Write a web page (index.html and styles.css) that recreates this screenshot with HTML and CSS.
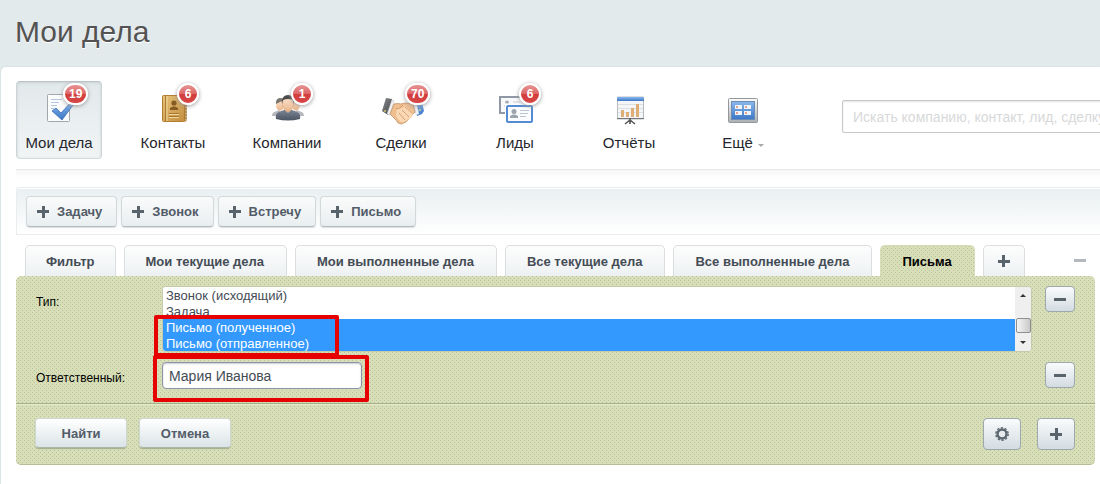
FILE: index.html
```html
<!DOCTYPE html>
<html lang="ru">
<head>
<meta charset="utf-8">
<title>Мои дела</title>
<link rel="stylesheet" href="styles.css">
</head>
<body>
<h1 class="title">Мои дела</h1>
<main class="panel">
  <div class="top">
    <nav class="nav">
      <a class="nav-item active" href="#">
        <svg class="nav-icon" viewBox="0 0 44 34"><defs><linearGradient id="blue" x2="0" y2="1"><stop stop-color="#8ab8ec"/><stop offset="1" stop-color="#3b76c6"/></linearGradient></defs>
          <rect x="10.5" y="2.500" width="22" height="27" rx="1" fill="#fbfcfd" stroke="#a3a7ad"/>
          <path d="M14 7.500h11M14 10.500h8M14 13.500h6M14 16.500h3" stroke="#b5c5df"/>
          <path d="M15 19l4-3 5 5 11-12h4L25 28z" fill="url(#blue)" stroke="#3f72b5" stroke-width=".8"/></svg>
        <span>Мои дела</span><b class="badge">19</b></a>
      <a class="nav-item" href="#">
        <svg class="nav-icon" viewBox="0 0 44 34"><defs><linearGradient id="gold" x2="1" y2="1"><stop stop-color="#e5c37c"/><stop offset="1" stop-color="#c48e3e"/></linearGradient></defs>
          <path d="M33 5h2v24h-2" fill="#f2dfb0" stroke="#a97a35"/><path d="M33 8h3M33 11h3M33 14h3M33 17h3M33 20h3M33 23h3M33 26h3" stroke="#8f6428"/>
          <rect x="11.500" y="3.500" width="22" height="26" rx="1" fill="url(#gold)" stroke="#b17d31"/>
          <path d="M14.500 4v25" stroke="#ad7b35"/><path d="M16 4v25" stroke="#f0d697"/>
          <circle cx="23" cy="11" r="2.600" fill="#845b20"/><path d="M19 18v-2l3-1.500h2l3 1.500v2z" fill="#845b20"/>
          <path d="M18 22.500h10M18 25.500h10" stroke="#f0d79d"/><path d="M18 21.500h10M18 24.500h10" stroke="#a6762f"/></svg>
        <span>Контакты</span><b class="badge">6</b></a>
      <a class="nav-item" href="#">
        <svg class="nav-icon" viewBox="0 0 44 34"><defs><linearGradient id="suit" x2="0" y2="1"><stop stop-color="#7b8594"/><stop offset="1" stop-color="#4b5462"/></linearGradient><linearGradient id="skin" x2="0" y2="1"><stop stop-color="#ffe6cf"/><stop offset="1" stop-color="#e9b68c"/></linearGradient></defs>
          <path d="M7 24c0-4 3-4 7-6l5 6zM39 24c0-4-3-4-7-6l-5 6z" fill="#b4b7bb"/>
          <ellipse cx="15" cy="13" rx="4" ry="5.500" fill="url(#skin)"/><ellipse cx="31" cy="13" rx="4" ry="5.500" fill="url(#skin)"/>
          <path d="M11 12c-1-7 7-7 8-4zM35 12c1-7-7-7-8-4z" fill="#7c7670"/>
          <path d="M11 27c-1-6 2-7 8-9h8c6 2 9 3 8 9q-12 3-24 0z" fill="url(#suit)"/>
          <path d="M19 17l4 4 4-4z" fill="#e8b88e"/>
          <ellipse cx="23" cy="12" rx="5.600" ry="7.400" fill="url(#skin)" stroke="#d5a27b" stroke-width=".5"/>
          <path d="M17 12c-2-12 14-12 12 0l-1-4q-5-2-10 0z" fill="#4a4a4b"/></svg>
        <span>Компании</span><b class="badge">1</b></a>
      <a class="nav-item" href="#">
        <svg class="nav-icon" viewBox="0 0 44 34"><defs><linearGradient id="dark" x2="1" y2="1"><stop stop-color="#898b8e"/><stop offset="1" stop-color="#424548"/></linearGradient></defs>
          <path d="M7 6l6 1-4 16-6-4z" fill="url(#dark)"/><path d="M13 8l2 1-4 14-3-1z" fill="#f2f3f4" stroke="#bbb" stroke-width=".5"/>
          <path d="M36 9l6-3 3 13-2 3-5 2z" fill="url(#blue)"/><path d="M34 10l3-1 3 13-3 1z" fill="#eef4fa" stroke="#b7c6d7" stroke-width=".5"/>
          <path d="M15 12q4-1 7 0l4-1 8 1 2 8-3 3-6 7-5 2q-3 0-5-4l-6-6z" fill="#f0bf91" stroke="#c08e61" stroke-width=".8"/>
          <path d="M18 17q5 0 8-3l7 6q2 6-4 7-3 4-7 3-4-3-5-7z" fill="#fad8b4"/>
          <path d="M24 13q-3 4-7 4M26 15l7 6M23 18l7 7M20 21l6 7" fill="none" stroke="#c48a5b" stroke-width=".7"/>
          <circle cx="6" cy="19" r="1" fill="#d1c76e"/><circle cx="41" cy="18" r="1" fill="#cfd68e"/></svg>
        <span>Сделки</span><b class="badge">70</b></a>
      <a class="nav-item" href="#">
        <svg class="nav-icon" viewBox="0 0 44 34"><path d="M7 5h28v16H7z" fill="#f8f9fa" stroke="#8f98a4" stroke-width="2"/>
          <ellipse cx="14" cy="10" rx="2" ry="1.500" fill="#a7afb8"/><path d="M11 14h5M20 10h7M20 13h6" stroke="#c8cdd3"/>
          <path d="M12 12h29v20H12z" fill="#fff"/><rect x="14" y="14" width="25" height="16" rx="1" fill="#fbfcfd" stroke="#548bd4" stroke-width="2"/>
          <circle cx="21" cy="19.500" r="2.500" fill="#9ca5ae"/><path d="M17 26v-2l3-1.500h2l3 1.500v2z" fill="#9ca5ae"/>
          <path d="M27 18.500h9M27 21.500h8M27 24.500h6" stroke="#bcc4ce"/></svg>
        <span>Лиды</span><b class="badge">6</b></a>
      <a class="nav-item" href="#">
        <svg class="nav-icon" viewBox="0 0 44 34"><path d="M10.500 5h26v22h-26z" fill="#f4f5f6" stroke="#b9bcbf"/><path d="M11 12.500h25M11 16.500h25M11 20.500h25" stroke="#dde0e2"/>
          <path d="M10 5h27v4H10z" fill="url(#blue)"/><path d="M14 18h3v7h-3zM19 20h3v5h-3zM24 16h3v9h-3zM29 12h3v13h-3z" fill="#dfad76"/>
          <path d="M10 26.500h27" stroke="#777"/><path d="M23 26v6M23 28l-5 4M23 28l5 4" stroke="#555" stroke-width="1.600"/></svg>
        <span>Отчёты</span></a>
      <a class="nav-item" href="#">
        <svg class="nav-icon" viewBox="0 0 44 34"><defs><linearGradient id="frame" x2="0" y2="1"><stop stop-color="#fbfbfb"/><stop offset="1" stop-color="#adb0b3"/></linearGradient></defs>
          <rect x="7.500" y="6.500" width="29" height="24" rx="1" fill="url(#frame)" stroke="#94989c"/>
          <rect x="10.500" y="9.500" width="23" height="18" fill="url(#blue)" stroke="#6e8db5"/>
          <path d="M14 13h7v4h-7zM23 13h7v4h-7zM14 19h7v4h-7zM23 19h7v4h-7z" fill="#edf5fb"/>
          <path d="M15 14h2v2h-2zM24 14h2v2h-2zM15 20h2v2h-2zM24 20h2v2h-2z" fill="#e7a08e"/></svg>
        <span class="more">Ещё</span></a>
    </nav>
    <input class="search" type="text" aria-label="Поиск" placeholder="Искать компанию, контакт, лид, сделку">
  </div>
  <div class="toolbar">
    <button class="add" type="button"><i class="plus"></i>Задачу</button>
    <button class="add" type="button"><i class="plus"></i>Звонок</button>
    <button class="add" type="button"><i class="plus"></i>Встречу</button>
    <button class="add" type="button"><i class="plus"></i>Письмо</button>
  </div>
  <div class="tabs">
    <button class="tab tab-filter" type="button">Фильтр</button>
    <button class="tab" type="button">Мои текущие дела</button>
    <button class="tab" type="button">Мои выполненные дела</button>
    <button class="tab" type="button">Все текущие дела</button>
    <button class="tab" type="button">Все выполненные дела</button>
    <button class="tab current dotted" type="button">Письма</button>
    <button class="tab tab-plus" type="button" aria-label="Добавить фильтр"><i class="plus"></i></button>
    <button class="collapse" type="button" aria-label="Свернуть"><i class="minus"></i></button>
  </div>
  <form class="filter dotted">
    <div class="fields">
      <div class="row">
        <label class="label" for="type">Тип:</label>
        <div class="field list">
          <select class="types" id="type" multiple size="4">
            <option>Звонок (исходящий)</option>
            <option>Задача</option>
            <option selected>Письмо (полученное)</option>
            <option selected>Письмо (отправленное)</option>
          </select>
          <div class="scroll" aria-hidden="true"><i class="arrow up"></i><i class="thumb"></i><i class="arrow down"></i></div>
          <div class="mark mark-types"></div>
        </div>
        <button class="square" type="button" aria-label="Убрать тип"><i class="minus"></i></button>
      </div>
      <div class="row">
        <label class="label" for="owner">Ответственный:</label>
        <div class="field">
          <input class="owner" id="owner" type="text" value="Мария Иванова">
          <div class="mark mark-owner"></div>
        </div>
        <button class="square" type="button" aria-label="Убрать ответственного"><i class="minus"></i></button>
      </div>
    </div>
    <div class="actions">
      <button class="action" type="button">Найти</button>
      <button class="action" type="button">Отмена</button>
      <button class="square large first" type="button" aria-label="Настройки"><svg class="gear" viewBox="0 0 14 14"><circle cx="7" cy="7" r="4.500" fill="none" stroke="#5d676f" stroke-width="2.400"/><circle cx="7" cy="7" r="6.200" fill="none" stroke="#5d676f" stroke-width="1.400" stroke-dasharray="2.200 1.700"/></svg></button>
      <button class="square large" type="button" aria-label="Добавить поле"><i class="plus"></i></button>
    </div>
  </form>
</main>
</body>
</html>
```
FILE: styles.css
```css
* { box-sizing: border-box; }
body {
  margin: 0;
  min-height: 100vh;
  display: flex;
  flex-direction: column;
  overflow: hidden;
  background: #e3eaec;
  font-family: "Liberation Sans", Arial, sans-serif;
  font-size: 13px;
  color: #444c55;
}
button, input, select { font: inherit; color: inherit; margin: 0; }
button { cursor: pointer; }
.title {
  margin: 0;
  padding: 14px 15px 17px;
  font-size: 30px;
  line-height: 36px;
  font-weight: normal;
  color: #535353;
  text-shadow: 0 1px #fff;
}
.panel {
  flex: 1;
  margin-left: 1px;
  padding: 14px 0 19px 15px;
  background: #fff;
  border-radius: 5px 0 0 0;
  box-shadow: 0 0 2px #c5d0d4;
}
.top {
  display: flex;
  align-items: flex-start;
  gap: 56px;
  padding-bottom: 10px;
  position: relative;
}
.top::after {
  content: "";
  position: absolute;
  left: 0;
  right: 0;
  top: 100%;
  height: 8px;
  border-top: 1px solid #e6e8e8;
  background: linear-gradient(#f6f6f6, #fff);
}
.nav { display: flex; gap: 28px; }
.nav-item {
  position: relative;
  display: flex;
  flex-direction: column;
  align-items: center;
  gap: 8px;
  width: 86px;
  padding: 10px 0 6px;
  border: 1px solid transparent;
  border-radius: 4px;
  font-size: 15px;
  line-height: 18px;
  color: #25262d;
  text-decoration: none;
  white-space: nowrap;
}
.nav-item.active {
  background: linear-gradient(#e2e9eb, #f1f4f5);
  border-color: #b9c3c8 #ccd4d7 #d5dcde;
  box-shadow: inset 0 1px 3px #c9d2d5;
}
.nav-icon { width: 44px; height: 34px; overflow: visible; }
.badge {
  position: absolute;
  left: calc(50% + 4px);
  top: 1px;
  min-width: 22px;
  height: 22px;
  padding: 0 4px;
  border: 2px solid #fff;
  border-radius: 11px;
  background: linear-gradient(#e79494, #dd6464 50%, #d13c3c 51%, #d84848);
  box-shadow: 0 1px 4px #999;
  color: #fff;
  font-size: 12px;
  line-height: 18px;
  text-align: center;
}
.more::after {
  content: "";
  display: inline-block;
  margin-left: 5px;
  border: 3px solid transparent;
  border-top-color: #aaa;
  border-bottom: 0;
  vertical-align: 1px;
}
.search {
  flex: 0 0 300px;
  height: 33px;
  margin-top: 19px;
  padding: 0 10px;
  border: 1px solid #c6c8c8;
  border-radius: 2px;
  box-shadow: inset 0 1px 2px #e4e4e4;
  background: #fff;
  font-size: 14px;
}
.search::placeholder { color: #d7d9d9; }
.toolbar {
  display: flex;
  gap: 4px;
  margin-top: 18px;
  padding: 8px 9px 7px;
  border: 1px solid #e9edee;
  border-right: 0;
  border-radius: 3px 0 0 0;
  background: linear-gradient(#e9eff1, #fff);
  box-shadow: inset 0 1px #fff;
}
.add {
  display: flex;
  align-items: center;
  gap: 8px;
  height: 31px;
  padding: 0 14px 0 10px;
  border: 1px solid #d2d9db;
  border-bottom-color: #b4bbbe;
  border-radius: 4px;
  background: linear-gradient(#fafbfb, #e9eef0);
  box-shadow: 0 1px 1px #dcdfe0;
  color: #535c69;
  font-weight: bold;
}
.plus, .minus { display: block; flex: none; width: 12px; height: 12px; }
.plus {
  background:
    linear-gradient(#59636b, #59636b) center / 12px 3px no-repeat,
    linear-gradient(#59636b, #59636b) center / 3px 12px no-repeat;
}
.minus { background: linear-gradient(#59636b, #59636b) center / 12px 3px no-repeat; }
.tabs {
  display: flex;
  gap: 8px;
  margin: 10px 14px 0 9px;
}
.tab {
  height: 31px;
  padding: 0 22px 0 21px;
  border: 1px solid #dadede;
  border-bottom: 0;
  border-radius: 5px 5px 0 0;
  background: linear-gradient(#fdfdfd, #eef1f3);
  font-weight: bold;
  white-space: nowrap;
}
.tab-filter { padding: 0 20px; }
.tab-plus { padding: 0 14px; }
.dotted {
  background:
    conic-gradient(from 270deg at 1px 1px, #b9c399 90deg, transparent 0) 0 0 / 4px 4px,
    conic-gradient(from 270deg at 1px 1px, #b9c399 90deg, transparent 0) 2px 2px / 4px 4px,
    #d8dfb8;
}
.current { border-color: transparent; color: #000; }
.collapse {
  margin-left: auto;
  padding: 0;
  border: 0;
  background: none;
  opacity: .45;
}
.filter {
  margin-right: 5px;
  border-bottom: 1px solid #b5bd96;
  border-radius: 5px;
}
.fields {
  display: grid;
  gap: 10px;
  padding: 10px 20px 14px;
  border-bottom: 1px solid #a5af86;
}
.row {
  display: grid;
  grid-template-columns: 113px minmax(0, 1fr) 30px;
  column-gap: 13px;
  align-items: start;
}
.label { padding-top: 8px; font-size: 12px; line-height: 16px; color: #000; }
.field { position: relative; }
.list {
  display: flex;
  height: 66px;
  border: 1px solid #c4cba9;
  border-radius: 4px;
  background: #fff;
}
.types {
  flex: 1;
  height: 64px;
  padding: 0;
  border: 0;
  border-radius: 3px 0 0 3px;
  outline: 0;
  background: #fff;
  overflow: hidden;
}
.types option { height: 16px; min-height: 16px; padding: 1px 3px 0; line-height: 15px; }
.types option:checked {
  background: linear-gradient(#3399ff, #3399ff);
  -webkit-text-fill-color: #fff;
}
.scroll {
  display: flex;
  flex-direction: column;
  align-items: center;
  width: 16px;
  padding: 7px 0;
  border-radius: 0 3px 3px 0;
  background: #efefef;
}
.arrow { border: 3px solid transparent; }
.up { border-top: 0; border-bottom-color: #333; }
.down { border-bottom: 0; border-top-color: #333; margin-top: auto; }
.thumb {
  width: 15px;
  height: 15px;
  margin-top: 21px;
  border: 1px solid #8f8f8f;
  border-radius: 2px;
  background: linear-gradient(90deg, #f5f5f5, #c9c9c9);
}
.mark { position: absolute; border: 4px solid #e60000; border-radius: 2px; pointer-events: none; }
.mark-types { left: -9px; top: 28px; width: 185px; height: 42px; }
.mark-owner { left: -9px; top: -7px; width: 216px; height: 47px; }
.owner {
  display: block;
  width: 200px;
  height: 27px;
  padding: 0 6px;
  border: 1px solid #8b93a5;
  border-radius: 4px;
  box-shadow: inset 0 1px 2px #c9ccd2;
  background: #fff;
  font-size: 14px;
}
.square {
  display: flex;
  align-items: center;
  justify-content: center;
  width: 30px;
  height: 26px;
  padding: 0;
  border: 1px solid #9ba8ac;
  border-radius: 4px;
  background: linear-gradient(#fafbfc, #d3dce1);
}
.actions {
  display: flex;
  gap: 12px;
  padding: 13px 20px 14px 19px;
  border-top: 1px solid #e3e9c9;
}
.action {
  width: 92px;
  height: 30px;
  padding: 0;
  border: 1px solid #cfd7d5;
  border-bottom-color: #aeb7a6;
  border-radius: 4px;
  background: linear-gradient(#fff, #dbe4e7);
  box-shadow: 0 1px 1px #a4ad8c;
  color: #535c69;
  font-weight: bold;
}
.large { width: 38px; height: 32px; }
.first { margin: 0 4px 0 auto; }
.gear { width: 14px; height: 14px; }
```
